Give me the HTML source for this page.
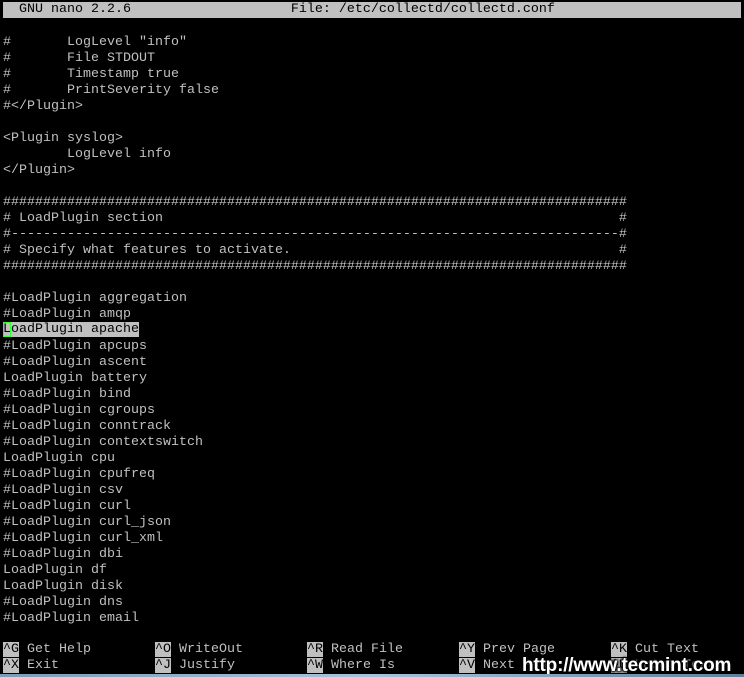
<!DOCTYPE html>
<html><head><style>
html,body{margin:0;padding:0;background:#000;}
body{width:744px;height:677px;overflow:hidden;position:relative;}
.t{position:absolute;left:3px;top:2px;width:738px;font-family:"Liberation Mono",monospace;font-size:13.33px;line-height:16px;color:#c0c0c0;}
.r{height:16px;white-space:pre;position:relative;}
.hd{background:#c0c0c0;color:#000;}
.k{background:#c0c0c0;color:#000;}
.sel{background:#c0c0c0;color:#000;}
.cur{outline:1px solid #3f3;outline-offset:-1px;}
.c{position:absolute;top:0;}
.wm{position:absolute;left:522px;top:655px;font-family:"Liberation Sans",sans-serif;font-weight:bold;font-size:19px;color:#fff;text-shadow:1px 1px 2px #000,-1px -1px 2px #000,1px -1px 2px #000,-1px 1px 2px #000;letter-spacing:-0.2px;}
.bar{position:absolute;left:0;top:674px;width:744px;height:3px;background:linear-gradient(90deg,#7d9bb5,#a8c4d8,#5f7f99);}
.tx{position:relative;top:1px;}
</style></head><body>
<div class="t"><div class="r hd">  GNU nano 2.2.6                    File: /etc/collectd/collectd.conf</div><div class="r"></div><div class="r"><span class="tx">#       LogLevel "info"</span></div><div class="r"><span class="tx">#       File STDOUT</span></div><div class="r"><span class="tx">#       Timestamp true</span></div><div class="r"><span class="tx">#       PrintSeverity false</span></div><div class="r"><span class="tx">#&lt;/Plugin&gt;</span></div><div class="r"></div><div class="r"><span class="tx">&lt;Plugin syslog&gt;</span></div><div class="r"><span class="tx">        LogLevel info</span></div><div class="r"><span class="tx">&lt;/Plugin&gt;</span></div><div class="r"></div><div class="r"><span class="tx">##############################################################################</span></div><div class="r"><span class="tx"># LoadPlugin section                                                         #</span></div><div class="r"><span class="tx">#----------------------------------------------------------------------------#</span></div><div class="r"><span class="tx"># Specify what features to activate.                                         #</span></div><div class="r"><span class="tx">##############################################################################</span></div><div class="r"></div><div class="r"><span class="tx">#LoadPlugin aggregation</span></div><div class="r"><span class="tx">#LoadPlugin amqp</span></div><div class="r"><span class="sel"><span class="cur">L</span>oadPlugin apache</span></div><div class="r"><span class="tx">#LoadPlugin apcups</span></div><div class="r"><span class="tx">#LoadPlugin ascent</span></div><div class="r"><span class="tx">LoadPlugin battery</span></div><div class="r"><span class="tx">#LoadPlugin bind</span></div><div class="r"><span class="tx">#LoadPlugin cgroups</span></div><div class="r"><span class="tx">#LoadPlugin conntrack</span></div><div class="r"><span class="tx">#LoadPlugin contextswitch</span></div><div class="r"><span class="tx">LoadPlugin cpu</span></div><div class="r"><span class="tx">#LoadPlugin cpufreq</span></div><div class="r"><span class="tx">#LoadPlugin csv</span></div><div class="r"><span class="tx">#LoadPlugin curl</span></div><div class="r"><span class="tx">#LoadPlugin curl_json</span></div><div class="r"><span class="tx">#LoadPlugin curl_xml</span></div><div class="r"><span class="tx">#LoadPlugin dbi</span></div><div class="r"><span class="tx">LoadPlugin df</span></div><div class="r"><span class="tx">LoadPlugin disk</span></div><div class="r"><span class="tx">#LoadPlugin dns</span></div><div class="r"><span class="tx">#LoadPlugin email</span></div><div class="r"></div><div class="r"><span class="c" style="left:0"><span class="k">^G</span> Get Help</span><span class="c" style="left:152px"><span class="k">^O</span> WriteOut</span><span class="c" style="left:304px"><span class="k">^R</span> Read File</span><span class="c" style="left:456px"><span class="k">^Y</span> Prev Page</span><span class="c" style="left:608px"><span class="k">^K</span> Cut Text</span></div><div class="r"><span class="c" style="left:0"><span class="k">^X</span> Exit</span><span class="c" style="left:152px"><span class="k">^J</span> Justify</span><span class="c" style="left:304px"><span class="k">^W</span> Where Is</span><span class="c" style="left:456px"><span class="k">^V</span> Next Page</span><span class="c" style="left:608px"><span class="k">^U</span> UnCut Text</span></div></div>
<div class="wm">http://www.tecmint.com</div>
<div class="bar"></div>
</body></html>
